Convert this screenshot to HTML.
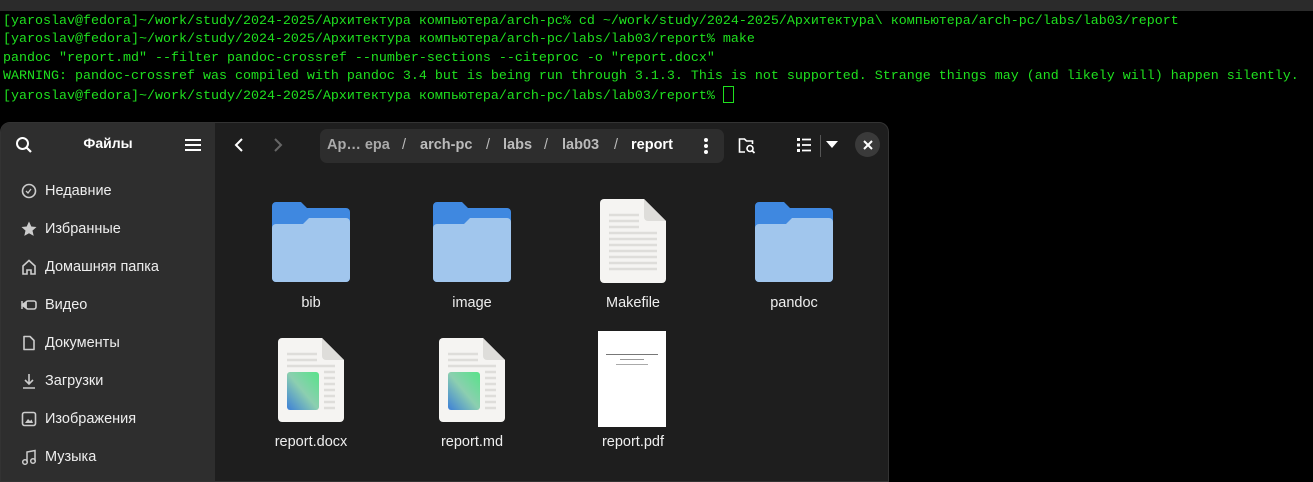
<!DOCTYPE html>
<html><head><meta charset="utf-8"><style>
*{margin:0;padding:0;box-sizing:border-box}
body{width:1313px;height:470px;background:#000;overflow:hidden;position:relative;font-family:"Liberation Sans","Noto Sans CJK SC",sans-serif}
.top{position:absolute;left:0;top:0;width:1313px;height:11px;background:#2b2b2b}
.term{position:absolute;left:3px;top:13px;font-family:"Liberation Mono","DejaVu Sans Mono",monospace;font-size:13.33px;line-height:18.25px;color:#1fe01f;white-space:pre}
.cur{display:inline-block;width:11px;height:17px;border:1px solid #1fe01f;vertical-align:-4px}
.win{position:absolute;left:0;top:122px;width:889px;height:360px;background:#1e1e1e;border-radius:10px 10px 0 0;overflow:hidden;border:1px solid #333}
.side{position:absolute;left:0;top:0;width:214px;height:100%;background:#2e2e2e}
.side .t{position:absolute;left:0;width:214px;top:12px;text-align:center;font-weight:bold;font-size:14px;color:#fff}
.it{position:absolute;left:44px;font-size:14.5px;color:#eee}
.ic{position:absolute;left:20px;width:16px;height:16px}
.pb{position:absolute;left:319px;top:6px;width:404px;height:34px;background:#2d2d2d;border-radius:7px;font-size:14.5px;color:#bbb;font-weight:bold}
.pb span{position:absolute;top:8px}
.lbl{position:absolute;width:140px;text-align:center;font-size:14.5px;color:#eee}
.fold{position:absolute;width:78px;height:80px}
</style></head><body>
<div class="top"></div>
<div class="term">[yaroslav@fedora]~/work/study/2024-2025/Архитектура компьютера/arch-pc% cd ~/work/study/2024-2025/Архитектура\ компьютера/arch-pc/labs/lab03/report
[yaroslav@fedora]~/work/study/2024-2025/Архитектура компьютера/arch-pc/labs/lab03/report% make
pandoc "report.md" --filter pandoc-crossref --number-sections --citeproc -o "report.docx"
WARNING: pandoc-crossref was compiled with pandoc 3.4 but is being run through 3.1.3. This is not supported. Strange things may (and likely will) happen silently.
[yaroslav@fedora]~/work/study/2024-2025/Архитектура компьютера/arch-pc/labs/lab03/report% <span class="cur"></span></div>

<div class="win">
<div class="side">
<svg style="position:absolute;left:14px;top:13px" width="18" height="18" viewBox="0 0 18 18"><circle cx="7.5" cy="7.5" r="5.5" fill="none" stroke="#fff" stroke-width="2"/><path d="M11.5 11.5L16 16" stroke="#fff" stroke-width="2.2"/></svg>
<div class="t">Файлы</div>
<svg style="position:absolute;left:184px;top:15px" width="16" height="14"><path d="M0 2h16M0 7h16M0 12h16" stroke="#fff" stroke-width="2"/></svg>
<svg class="ic" style="top:60px" viewBox="0 0 16 16"><circle cx="8" cy="8" r="6.5" fill="none" stroke="#ccc" stroke-width="1.6"/><path d="M5 8l2 2 3-4" stroke="#ccc" fill="none" stroke-width="1.3"/></svg><div class="it" style="top:60px">Недавние</div>
<svg class="ic" style="top:98px" viewBox="0 0 16 16"><path d="M8 0.5l2.3 5 5.2.5-4 3.6 1.2 5.3L8 12.2 3.3 14.9l1.2-5.3-4-3.6 5.2-.5z" fill="#ccc"/></svg><div class="it" style="top:98px">Избранные</div>
<svg class="ic" style="top:136px" viewBox="0 0 16 16"><path d="M2 15V7l6-5.5L14 7v8h-4v-4H6v4z" fill="none" stroke="#ccc" stroke-width="1.6"/></svg><div class="it" style="top:136px">Домашняя папка</div>
<svg class="ic" style="top:174px" viewBox="0 0 16 16"><path d="M1 4v8M1 8l4-3v6z" stroke="#ccc" fill="#ccc" stroke-width="1.5"/><rect x="5" y="4" width="10" height="8" rx="2" fill="none" stroke="#ccc" stroke-width="1.6"/></svg><div class="it" style="top:174px">Видео</div>
<svg class="ic" style="top:212px" viewBox="0 0 16 16"><path d="M3 1.5h6l4 4V14.5H3z" fill="none" stroke="#ccc" stroke-width="1.6" stroke-linejoin="round"/></svg><div class="it" style="top:212px">Документы</div>
<svg class="ic" style="top:250px" viewBox="0 0 16 16"><path d="M8 1v10M4 7l4 4 4-4M2 15h12" stroke="#ccc" fill="none" stroke-width="1.6"/></svg><div class="it" style="top:250px">Загрузки</div>
<svg class="ic" style="top:288px" viewBox="0 0 16 16"><rect x="1.5" y="1.5" width="13" height="13" rx="2" fill="none" stroke="#ccc" stroke-width="1.6"/><path d="M4 12l3-4 2 2 1.5-1.5L12 12z" fill="#ccc"/></svg><div class="it" style="top:288px">Изображения</div>
<svg class="ic" style="top:326px" viewBox="0 0 16 16"><circle cx="4" cy="13" r="2.3" fill="none" stroke="#ccc" stroke-width="1.5"/><circle cx="12" cy="12" r="2.3" fill="none" stroke="#ccc" stroke-width="1.5"/><path d="M6 13V3l8-1.5V12" fill="none" stroke="#ccc" stroke-width="1.5"/></svg><div class="it" style="top:326px">Музыка</div>
</div>
<svg style="position:absolute;left:232px;top:14px" width="12" height="16"><path d="M9 2L3 8l6 6" stroke="#fff" stroke-width="2" fill="none"/></svg>
<svg style="position:absolute;left:271px;top:14px" width="12" height="16"><path d="M3 2l6 6-6 6" stroke="#666" stroke-width="2" fill="none"/></svg>
<div class="pb"><span style="left:7px;color:#aaa">Ар… ера</span><span style="left:82px;font-weight:normal">/</span><span style="left:100px">arch-pc</span><span style="left:166px;font-weight:normal">/</span><span style="left:183px">labs</span><span style="left:224px;font-weight:normal">/</span><span style="left:242px">lab03</span><span style="left:294px;font-weight:normal">/</span><span style="left:311px;color:#fff">report</span>
<svg style="position:absolute;left:383px;top:9px" width="6" height="16"><circle cx="3" cy="2" r="2" fill="#fff"/><circle cx="3" cy="8" r="2" fill="#fff"/><circle cx="3" cy="14" r="2" fill="#fff"/></svg></div>
<svg style="position:absolute;left:737px;top:14px" width="18" height="18" viewBox="0 0 18 18"><path d="M7 15H1.5V2h5l2 2h6v3" fill="none" stroke="#fff" stroke-width="1.6"/><circle cx="12" cy="11.5" r="3" fill="none" stroke="#fff" stroke-width="1.6"/><path d="M14 13.5l2.5 2.5" stroke="#fff" stroke-width="1.8"/></svg>
<svg style="position:absolute;left:796px;top:15px" width="15" height="14"><path d="M0 1.5h3M0 7h3M0 12.5h3" stroke="#fff" stroke-width="3"/><path d="M5 1.5h9M5 7h9M5 12.5h9" stroke="#fff" stroke-width="1.8"/></svg>
<div style="position:absolute;left:819px;top:12px;width:1px;height:22px;background:#555"></div>
<svg style="position:absolute;left:825px;top:18px" width="12" height="8"><path d="M0 0h12L6 7z" fill="#fff"/></svg>
<div style="position:absolute;left:854px;top:9px;width:25px;height:25px;border-radius:50%;background:#3a3a3a"></div>
<svg style="position:absolute;left:862px;top:17px" width="10" height="10"><path d="M1 1l8 8M9 1L1 9" stroke="#fff" stroke-width="2"/></svg>

<svg class="fold" style="left:271px;top:79px" viewBox="0 0 78 80"><path d="M4 0h25l6 6h39a4 4 0 0 1 4 4v66a4 4 0 0 1-4 4H4a4 4 0 0 1-4-4V4a4 4 0 0 1 4-4z" fill="#3f88e0"/><path d="M4 22h27l6-6h37a4 4 0 0 1 4 4v56a4 4 0 0 1-4 4H4a4 4 0 0 1-4-4V26a4 4 0 0 1 4-4z" fill="#a1c6ed"/></svg>
<div class="lbl" style="left:240px;top:172px">bib</div>
<svg class="fold" style="left:432px;top:79px" viewBox="0 0 78 80"><path d="M4 0h25l6 6h39a4 4 0 0 1 4 4v66a4 4 0 0 1-4 4H4a4 4 0 0 1-4-4V4a4 4 0 0 1 4-4z" fill="#3f88e0"/><path d="M4 22h27l6-6h37a4 4 0 0 1 4 4v56a4 4 0 0 1-4 4H4a4 4 0 0 1-4-4V26a4 4 0 0 1 4-4z" fill="#a1c6ed"/></svg>
<div class="lbl" style="left:401px;top:172px">image</div>
<svg style="position:absolute;left:599px;top:76px" width="66" height="84" viewBox="0 0 66 84"><path d="M4 0h40l22 22v58a4 4 0 0 1-4 4H4a4 4 0 0 1-4-4V4a4 4 0 0 1 4-4z" fill="#f5f4f2"/><path d="M44 0l22 22H48a4 4 0 0 1-4-4z" fill="#deddda"/><g stroke="#deddda" stroke-width="2.5"><path d="M9 16h30M9 22h30M9 28h30M9 34h48M9 40h48M9 46h48M9 52h48M9 58h48M9 64h48M9 70h48"/></g></svg>
<div class="lbl" style="left:562px;top:172px">Makefile</div>
<svg class="fold" style="left:754px;top:79px" viewBox="0 0 78 80"><path d="M4 0h25l6 6h39a4 4 0 0 1 4 4v66a4 4 0 0 1-4 4H4a4 4 0 0 1-4-4V4a4 4 0 0 1 4-4z" fill="#3f88e0"/><path d="M4 22h27l6-6h37a4 4 0 0 1 4 4v56a4 4 0 0 1-4 4H4a4 4 0 0 1-4-4V26a4 4 0 0 1 4-4z" fill="#a1c6ed"/></svg>
<div class="lbl" style="left:723px;top:172px">pandoc</div>
<svg style="position:absolute;left:277px;top:215px" width="66" height="84" viewBox="0 0 66 84"><defs><linearGradient id="g" x1="1" y1="0" x2="0" y2="1"><stop offset="0" stop-color="#57e389"/><stop offset="0.5" stop-color="#8ccfb0"/><stop offset="1" stop-color="#3c7fd8"/></linearGradient></defs><path d="M4 0h40l22 22v58a4 4 0 0 1-4 4H4a4 4 0 0 1-4-4V4a4 4 0 0 1 4-4z" fill="#f5f4f2"/><path d="M44 0l22 22H48a4 4 0 0 1-4-4z" fill="#deddda"/><g stroke="#deddda" stroke-width="2.5"><path d="M9 16h30M9 22h30M9 28h48M46 34h11M46 40h11M46 46h11M46 52h11M46 58h11M46 64h11M46 70h11"/></g><rect x="9" y="34" width="32" height="38" rx="3" fill="url(#g)"/></svg>
<div class="lbl" style="left:240px;top:311px">report.docx</div>
<svg style="position:absolute;left:438px;top:215px" width="66" height="84" viewBox="0 0 66 84"><path d="M4 0h40l22 22v58a4 4 0 0 1-4 4H4a4 4 0 0 1-4-4V4a4 4 0 0 1 4-4z" fill="#f5f4f2"/><path d="M44 0l22 22H48a4 4 0 0 1-4-4z" fill="#deddda"/><g stroke="#deddda" stroke-width="2.5"><path d="M9 16h30M9 22h30M9 28h48M46 34h11M46 40h11M46 46h11M46 52h11M46 58h11M46 64h11M46 70h11"/></g><rect x="9" y="34" width="32" height="38" rx="3" fill="url(#g)"/></svg>
<div class="lbl" style="left:401px;top:311px">report.md</div>
<div style="position:absolute;left:597px;top:208px;width:68px;height:96px;background:#fff"><div style="margin:23px 8px 0;height:1px;background:#777"></div><div style="margin:4px 22px 0;height:1px;background:#999"></div><div style="margin:4px 18px 0;height:1px;background:#aaa"></div></div>
<div class="lbl" style="left:562px;top:311px">report.pdf</div>
</div>
</body></html>
